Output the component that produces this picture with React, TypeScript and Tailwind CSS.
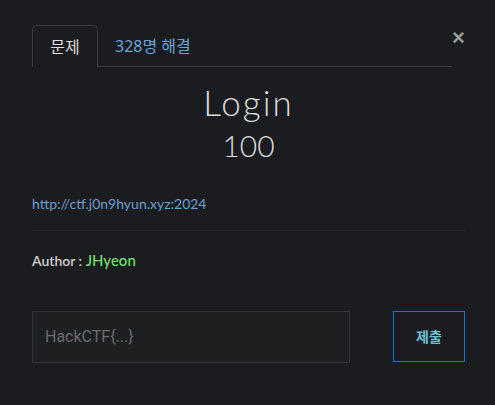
import React from 'react';

const App: React.FC = () => {
  return (
    <div className="min-h-[405px] w-[495px] bg-[#1b1c1f] pl-8 pr-[30px] pt-[25px] font-['Noto_Sans','Noto_Sans_CJK_KR',sans-serif]">
      {/* 탭 + 닫기 */}
      <div className="flex items-start">
        <div className="flex flex-1 border-b border-[#353a41]">
          <div className="-mb-px flex h-[42px] w-[66px] items-center justify-center rounded-t-[5px] border border-b-0 border-[#353a41] bg-[#1b1c1f] text-[16px] text-[#dcdcdc]">
            문제
          </div>
          <div className="flex h-[41px] items-center pl-[17px] text-[16px] text-[#6aa3d6]">
            328명 해결
          </div>
        </div>
        <button className="mt-[2px] w-[13px] text-[22px] font-bold leading-[22px] text-[#9a9a9a] font-['Liberation_Sans',sans-serif]">
          ×
        </button>
      </div>

      {/* 제목 */}
      <div className="mt-[15px] text-center font-['Lato',sans-serif] text-[#dddddd]">
        <div className="text-[35px] font-light leading-[40px] tracking-[2px]">Login</div>
        <div className="mt-[5px] text-[30px] font-light leading-[36px]">100</div>
      </div>

      {/* 설명 */}
      <div className="mt-[28px] font-['Lato',sans-serif]">
        <a className="text-[14px] text-[#6b9fd0]">http://ctf.j0n9hyun.xyz:2024</a>
        <div className="mt-[15px] border-t border-[#26282c]" />
        <div className="mt-[18px] text-[14px] font-semibold text-[#cfcfcf]">
          Author : <span className="text-[15px] font-medium text-[#6fe068]">JHyeon</span>
        </div>
      </div>

      {/* 플래그 입력 */}
      <div className="mt-[39px] flex items-center justify-between">
        <div className="flex h-[52px] w-[318px] items-center border border-[#2f353b] bg-[#1e1f21] px-3 font-['Roboto',sans-serif] text-[16px] text-[#6b6b6b]">
          HackCTF{'{...}'}
        </div>
        <button className="h-[51px] w-[72px] border border-[#1a72d6] text-[14px] font-bold text-[#66c0d6]">
          제출
        </button>
      </div>
    </div>
  );
};

export default App;
